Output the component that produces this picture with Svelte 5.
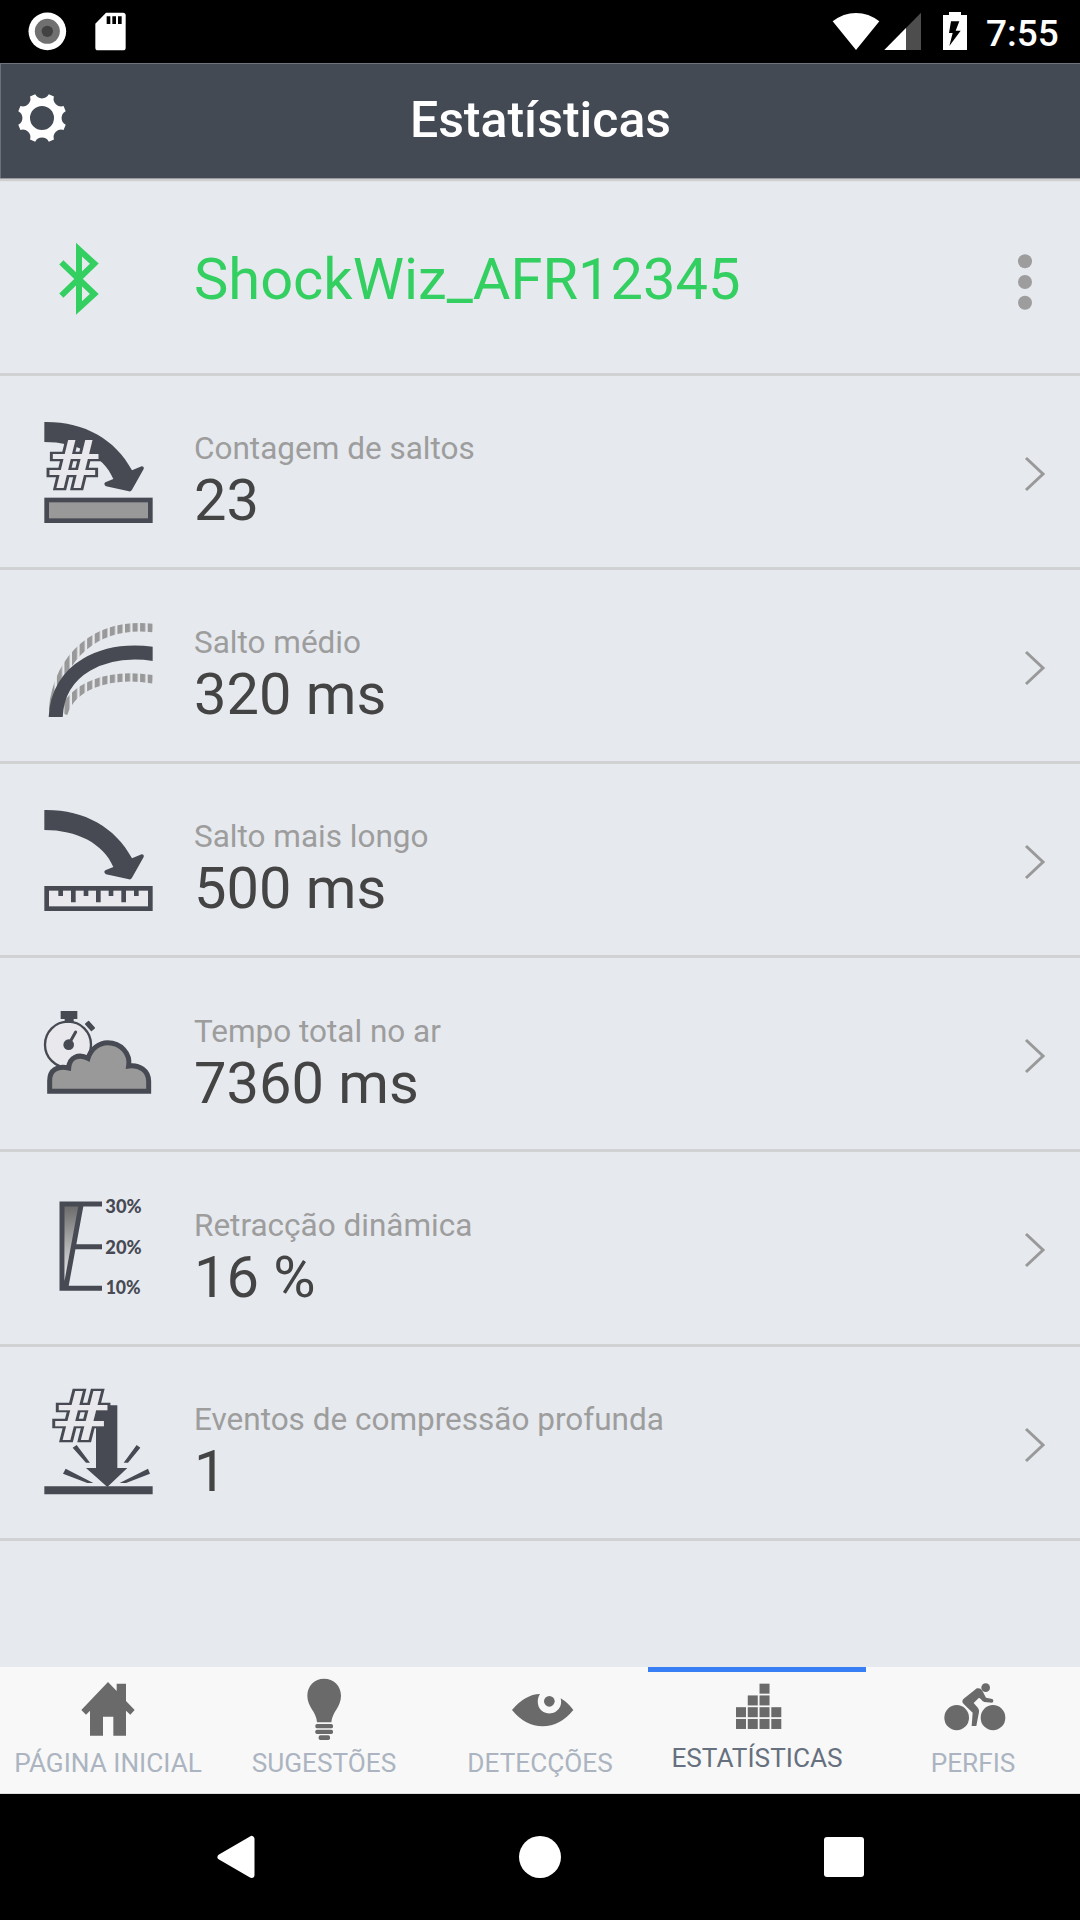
<script>
const title = 'Estatísticas';
const device = 'ShockWiz_AFR12345';

// top is where the icon viewBox starts
const stats = [
    { icon: 'count', top: 527, label: 'Contagem de saltos', value: '23' },
    { icon: 'average', top: -31, label: 'Salto médio', value: '320 ms' },
    { icon: 'longest', top: 552, label: 'Salto mais longo', value: '500 ms' },
    { icon: 'airtime', top: -66, label: 'Tempo total no ar', value: '7360 ms' },
    { icon: 'sag', top: 516, label: 'Retracção dinâmica', value: '16 %' },
    { icon: 'bottomout', top: -10, label: 'Eventos de compressão profunda', value: '1' }
];

const tabs = [
    { icon: 'home', left: 0, label: 'PÁGINA INICIAL' },
    { icon: 'bulb', left: 648, label: 'SUGESTÕES' },
    { icon: 'eye', left: 96, label: 'DETECÇÕES' },
    { icon: 'bars', left: -213, label: 'ESTATÍSTICAS' },
    { icon: 'bike', left: 435, label: 'PERFIS' }
];

let active = $state('bars');

// squares of the bar chart icon, [column, row]
const blocks = [[2, 0], [1, 1], [2, 1], [0, 2], [1, 2], [2, 2], [3, 2], [0, 3], [1, 3], [2, 3], [3, 3]];

const gearPoint = (deg) => {
    const a = (deg * Math.PI) / 180;
    return `${(74 * Math.cos(a)).toFixed(1)},${(74 * Math.sin(a)).toFixed(1)}`;
};
let gear = '';
for (let k = 0; k < 8; k++) {
    gear += `${k ? 'L' : 'M'}${gearPoint(k * 45 - 16)} A23,23 0 0 0 ${gearPoint(k * 45 + 16)} `;
}
gear += 'Z M36,0 A36,36 0 1 0 -36,0 A36,36 0 1 0 36,0 Z';
</script>

{#snippet jumpArrow(y)}
    <path transform="translate(0 {y})" d="M133,665 C250,663 345,715 396,810 L425,798 Q433,799 431,806 L396,868 Q393,874 387,873 L318,858 Q309,851 316,846 L340,836 C310,765 230,725 133,725 Z" />
{/snippet}

<div class="screen">
    <div class="status">
        <svg class="status-left" width="140" height="63" viewBox="0 0 420 189">
            <circle cx="142" cy="94" r="56.5" fill="#fff" />
            <circle cx="142" cy="94" r="37.5" fill="#707070" />
            <circle cx="142" cy="94" r="17" fill="#424242" />
            <path fill="#fff" d="M318,38 H369 Q377,38 377,46 V143 Q377,151 369,151 H294 Q286,151 286,143 V71 Z" />
            <path d="M320,49 h11 v23 h-11z M337,49 h11 v23 h-11z M354,49 h11 v23 h-11z" />
        </svg>
        <svg width="150" height="63" viewBox="150 0 450 189">
            <path fill="#fff" d="M228,150 L158,64 Q190,39 228,39 Q266,39 298,64 Z" />
            <path fill="#4d4d4d" d="M313,150 L423,38 V150 Z" />
            <path fill="#fff" d="M313,150 L378,84 V150 Z" />
            <path fill="#fff" d="M489,45 H507 V36 H543 V45 H561 V150 H489 Z" />
            <path d="M513,64 H538 L527,92 H542 L508,138 L518,99 H507 Z" />
        </svg>
        <span class="clock">7:55</span>
    </div>

    <header>
        <svg class="gear" width="50" height="50" viewBox="-75 -75 150 150"><path d={gear} /></svg>
        <h1>{title}</h1>
    </header>

    <main>
        <div class="row device">
            <svg class="icon" width="160" height="194" viewBox="0 -66 480 582">
                <path class="bt" d="M184,187 L283,282 L237,324 V149 L283,191 L184,287" />
            </svg>
            <div class="name">{device}</div>
            <svg class="more" width="20" height="60" viewBox="0 0 20 60">
                <circle cx="10" cy="9.3" r="7" />
                <circle cx="10" cy="30" r="7" />
                <circle cx="10" cy="50.7" r="7" />
            </svg>
        </div>

        {#each stats as s}
            <div class="row">
                <svg class="icon" width="160" height="191" viewBox="0 {s.top} 480 573">
                    {#if s.icon === 'count'}
                        {@render jumpArrow(0)}
                        <rect class="box" x="140" y="899" width="311" height="62" fill="#999" />
                        <text class="hash" transform="translate(137 863) scale(1.36 1)" font-size="198">#</text>
                    {:else if s.icon === 'average'}
                        <defs>
                            <pattern id="stripes" x="-11" y="0" width="22.7" height="800" patternUnits="userSpaceOnUse">
                                <rect width="15.5" height="800" fill="#999" />
                            </pattern>
                            <clipPath id="edge"><rect x="133" y="100" width="325" height="310" /></clipPath>
                        </defs>
                        <g fill="none" clip-path="url(#edge)">
                            <path stroke="url(#stripes)" stroke-width="26" d="M158,390 C176,225 290,125 459,143" />
                            <path stroke="url(#stripes)" stroke-width="25" d="M190,400 C215,320 320,275 459,297" />
                            <path stroke="#474a53" stroke-width="42" d="M167,412 C172,265 310,200 462,221" />
                        </g>
                    {:else if s.icon === 'longest'}
                        {@render jumpArrow(25)}
                        <rect class="box" x="140" y="925" width="311" height="61" fill="#e9e8ed" />
                        <path d="M175,925 h14 v23 h-14z M213,925 h14 v42 h-14z M251,925 h14 v23 h-14z M288,925 h14 v42 h-14z M326,925 h14 v23 h-14z M364,925 h14 v42 h-14z M402,925 h14 v23 h-14z" />
                    {:else if s.icon === 'airtime'}
                        <circle cx="204" cy="194" r="69" fill="#e9e8ed" stroke="#474a53" stroke-width="7" />
                        <path d="M182,93 h50 v24 h-11 v11 h-27 v-11 h-12z" />
                        <rect x="-15" y="-8" width="30" height="16" rx="2" transform="translate(270 138) rotate(48)" />
                        <circle cx="206" cy="194" r="16" />
                        <path stroke="#474a53" stroke-width="9" stroke-linecap="round" d="M208,190 L227,156" />
                        <path fill="#999" stroke="#474a53" stroke-width="15" d="M149,334 V302 C149,270 172,257 206,264 C208,232 236,220 264,235 C273,206 298,188 323,188 C362,188 392,220 386,258 C418,253 446,272 446,304 V334 Z" />
                    {:else if s.icon === 'sag'}
                        <defs>
                            <linearGradient id="sag" x1="0" y1="0" x2="0" y2="1">
                                <stop offset="0" stop-color="#6a6a6a" />
                                <stop offset="1" stop-color="#f4f4f6" />
                            </linearGradient>
                        </defs>
                        <path fill="url(#sag)" d="M190,676 H243 L196,915 Z" />
                        <path fill="none" stroke="#474a53" stroke-width="15" d="M306,672 H186 V925 H306 M243,676 L198,920 M224,800 H306" />
                        <g class="scale">
                            <text x="316" y="698" textLength="109" lengthAdjust="spacingAndGlyphs">30%</text>
                            <text x="316" y="822" textLength="109" lengthAdjust="spacingAndGlyphs">20%</text>
                            <text x="317" y="942" textLength="105" lengthAdjust="spacingAndGlyphs">10%</text>
                        </g>
                    {:else}
                        <path d="M288,165 H352 V353 H382 L322,410 L258,353 H288 Z" />
                        <path d="M133,408 H458 V432 H133 Z" />
                        <path d="M218,292 L230,284 L270,337 H258 Z M421,292 L410,284 L371,337 H384 Z M189,370 L197,355 L280,398 H262 Z M450,370 L444,355 L359,398 H378 Z" />
                        <text class="hash" transform="translate(154 270) scale(1.38 1)" font-size="208">#</text>
                    {/if}
                </svg>
                <div class="text">
                    <div class="label">{s.label}</div>
                    <div class="value">{s.value}</div>
                </div>
                <svg class="chevron" width="24" height="40" viewBox="0 0 24 40"><path d="M3,4 L20,20 L3,36" /></svg>
            </div>
        {/each}
    </main>

    <nav class="tabs">
        {#each tabs as t}
            <button class:active={active === t.icon} onclick={() => (active = t.icon)}>
                <svg width="216" height="75" viewBox="{t.left} 51 648 225">
                    {#if t.icon === 'home'}
                        <path d="M324,96 L350,123 V101 H378 V153 L404,180 L391,194 L378,182 V257 H340 V200 H309 V257 H270 V182 L258,194 L244,180 Z" />
                    {:else if t.icon === 'bulb'}
                        <path d="M951,217 C950,185 922,172 922,137 C922,107 944,86 972,86 C1001,86 1023,107 1023,137 C1023,172 996,185 994,217 Z" />
                        <rect x="946" y="222" width="53" height="13" rx="5" />
                        <rect x="946" y="239" width="53" height="13" rx="5" />
                        <rect x="956" y="256" width="34" height="14" rx="5" />
                    {:else if t.icon === 'eye'}
                        <path d="M336,180 Q375,133 420,132 C411,145 412,162 418,174 C427,190 450,195 467,185 C482,176 486,160 482,145 Q504,158 520,180 Q480,229 428,229 Q376,229 336,180 Z" />
                        <circle cx="448" cy="154" r="16" />
                    {:else if t.icon === 'bars'}
                        {#each blocks as [col, row]}
                            <rect x={48 + col * 35.3} y={101 + row * 35.3} width="30" height="30" />
                        {/each}
                    {:else}
                        <ellipse cx="710" cy="203" rx="37" ry="38" />
                        <ellipse cx="819" cy="203" rx="37" ry="38" />
                        <circle cx="797" cy="113" r="13" />
                        <path d="M773,115 Q782,114 787,122 L798,143 L817,147 Q823,152 817,158 L793,156 Q787,154 783,148 L777,143 L761,159 L774,174 Q778,180 777,186 L769,228 H755 L758,188 L731,162 Q723,153 731,146 L765,119 Q769,115 773,115 Z" />
                    {/if}
                </svg>
                <span>{t.label}</span>
            </button>
        {/each}
    </nav>

    <div class="system">
        <svg width="42" height="46" viewBox="0 0 42 46"><path stroke="#fff" stroke-width="6" stroke-linejoin="round" d="M4,23 L35,5 V41 Z" transform="translate(1.5 0)" /></svg>
        <svg width="42" height="46" viewBox="0 0 42 46"><circle cx="21" cy="23" r="21" /></svg>
        <svg width="42" height="46" viewBox="0 0 42 46"><rect x="1" y="3" width="40" height="40" rx="3" /></svg>
    </div>
</div>

<style>
:global(body) {
    margin: 0;
    background: #000;
}

.screen {
    display: flex;
    flex-direction: column;
    width: 1080px;
    height: 1920px;
    overflow: hidden;
    font-family: Roboto, "Liberation Sans", sans-serif;
    background: #e6e9ee;
}

svg {
    display: block;
    flex: none;
}

.status {
    display: flex;
    height: 63px;
    background: #000;
    color: #fff;
}

.status-left {
    margin-right: 690px;
}

.clock {
    margin-left: 6px;
    font-size: 37px;
    font-weight: 500;
    line-height: 67px;
}

header {
    display: grid;
    grid-template-columns: 100px 1fr 100px;
    align-items: center;
    box-sizing: border-box;
    height: 116px;
    padding-left: 17px;
    background: #444a54;
    border-top: 1px solid #70747c;
    border-bottom: 1px solid #999a9d;
    box-shadow: inset 1px 0 #6b7079, 0 2px 1px #cfcfcf;
    z-index: 1;
}

.gear {
    fill: #fff;
    margin-bottom: 6px;
}

h1 {
    margin: 0 0 2px;
    padding-right: 16px;
    text-align: center;
    color: #fff;
    font-size: 50px;
    font-weight: 500;
    line-height: 110px;
}

main {
    flex: 1;
}

.row {
    display: flex;
    box-sizing: border-box;
    height: 194.2px;
    border-bottom: 3px solid #cfd1d3;
}

.device {
    height: 196.6px;
}

.icon {
    fill: #474a53;
    margin-right: 34px;
}

.device .icon {
    margin-top: -1px;
}

.bt {
    fill: none;
    stroke: #34cf61;
    stroke-width: 18;
}

.name {
    flex: 1;
    padding-top: 70px;
    color: #34cf61;
    font-size: 57.8px;
    line-height: 60px;
}

.more {
    fill: #9d9d9d;
    margin: 73px 45px 0 0;
}

.box {
    stroke: #474a53;
    stroke-width: 14;
}

.hash {
    font-weight: 500;
    fill: #e9e8ed;
    stroke: #474a53;
    stroke-width: 13;
    paint-order: stroke;
}

.scale {
    font-family: Lato, sans-serif;
    font-size: 56px;
    font-weight: 900;
}

.text {
    flex: 1;
    padding-top: 55.5px;
}

.label {
    color: #9d9d9d;
    font-size: 31.5px;
    line-height: 36px;
}

.value {
    margin-top: 3px;
    color: #444;
    font-size: 57.8px;
    line-height: 60px;
}

.chevron {
    margin: 78px 33px 0 0;
    fill: none;
    stroke: #999;
    stroke-width: 3;
}

.tabs {
    display: grid;
    grid-template-columns: repeat(3, 216px) 218px 214px;
    height: 127px;
    box-sizing: border-box;
    background: #f8f8f8;
    border-bottom: 1px solid #ddd;
}

button {
    display: flex;
    flex-direction: column;
    align-items: center;
    padding: 0;
    border: 0;
    background: none;
    color: #abb4c0;
    font-family: inherit;
    font-size: 26.2px;
    line-height: 32px;
    white-space: nowrap;
}

button svg {
    fill: #6a6a6a;
    margin-bottom: 5px;
}

button.active {
    color: #66707e;
    box-shadow: inset 0 5px #387ef5;
}

.active svg {
    margin-bottom: 0;
}

.system {
    display: flex;
    justify-content: center;
    align-items: center;
    gap: 262px;
    height: 126px;
    background: #000;
}

.system svg {
    fill: #fff;
}
</style>
